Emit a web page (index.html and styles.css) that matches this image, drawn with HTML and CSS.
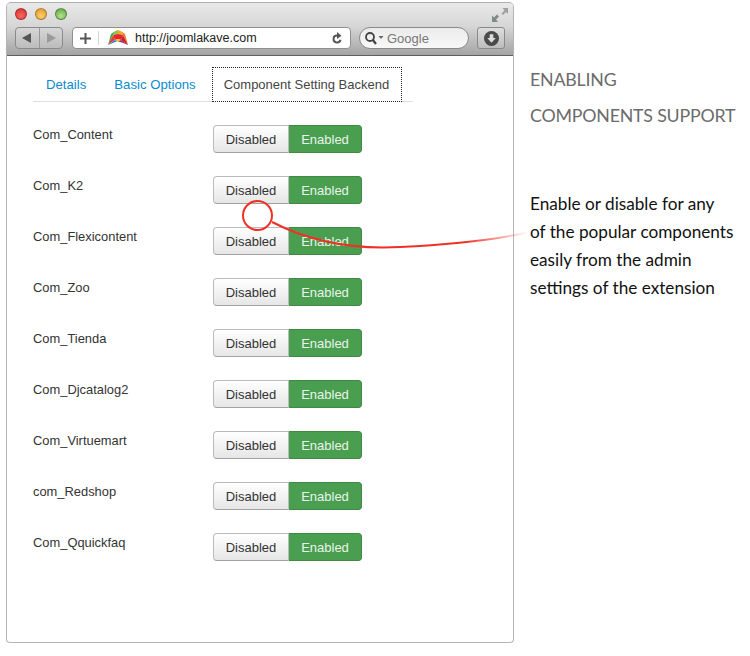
FILE: index.html
```html
<!DOCTYPE html>
<html lang="en">
<head>
<meta charset="utf-8">
<title>Enabling components support</title>
<link rel="stylesheet" href="styles.css">
</head>
<body>
<div class="page">
  <div class="window">
    <div class="chrome">
      <div class="lights">
        <span class="light red"></span><span class="light amber"></span><span class="light green"></span>
        <svg class="expand" width="16" height="14" viewBox="0 0 16 14"><path d="M0 14V7.500l2 2L5 6.500l2 2-3 3 2 2.500z" fill="#7f8a84"/><path d="M16 0v6l-2-2-3 3-1.500-1.500 3-3L10.500 0z" fill="#a0a0a0"/></svg>
      </div>
      <div class="tools">
        <div class="nav">
          <span class="navbtn"><svg width="12" height="12" viewBox="0 0 12 12"><path d="M1 6l9-5v10z" fill="#555"/></svg></span>
          <span class="navbtn"><svg width="12" height="12" viewBox="0 0 12 12"><path d="M11 6L2 1v10z" fill="#9a9a9a"/></svg></span>
        </div>
        <div class="address">
          <svg class="plus" width="11" height="11" viewBox="0 0 11 11"><path d="M4.500 0h2v4.500H11v2H6.500V11h-2V6.500H0v-2h4.500z" fill="#555"/></svg>
          <span class="divider"></span>
          <svg class="logo" width="20" height="16" viewBox="0 0 20 16">
            <path d="M10 0L6.500 1.500 5 5l5-1z" fill="#8cc63f"/>
            <path d="M6.500 1.500L3 4 0 15l5-10z" fill="#3faa4a"/>
            <path d="M10 0l3.500 1.500L15 5l-5-1z" fill="#f6a623"/>
            <path d="M13.500 1.500L17 4l3 11-5-10z" fill="#ef7d22"/>
            <path d="M5 5l5-1 5 1-2 5-3-1-3 1z" fill="#e6262c"/>
            <path d="M15 5l5 10-7-5z" fill="#c7202f"/>
            <path d="M5 5L0 15l7-5z" fill="#e0403a"/>
            <path d="M0 15l7-5 3 1-4 1.500z" fill="#2a86cf"/>
            <path d="M7 10l3-1 3 1-3 1.500z" fill="#f7c21e"/>
            <path d="M20 15l-7-5-3 1.500 4 1z" fill="#a02a56"/>
          </svg>
          <span class="url">http://joomlakave.com</span>
          <svg class="reload" width="12" height="13" viewBox="0 0 12 13"><path d="M6 2.500a4.500 4.500 0 1 0 4.500 5.200H8.400A2.500 2.500 0 1 1 6 4.500V7l4.500-3.200L6 0z" fill="#555"/></svg>
        </div>
        <div class="search">
          <svg width="19" height="13" viewBox="0 0 19 13"><circle cx="5" cy="5" r="4" fill="none" stroke="#444" stroke-width="1.800"/><path d="M7.500 7.500L11 12" stroke="#444" stroke-width="2.200"/><path d="M13.500 4h5L16 7z" fill="#666"/></svg>
          <span class="google">Google</span>
        </div>
        <span class="download"><svg width="15" height="15" viewBox="0 0 14 14"><circle cx="7" cy="7" r="7" fill="#4a4a4a"/><path d="M5.300 3h3.400v3.600H11L7 11 3 6.600h2.300z" fill="#ddd"/></svg></span>
      </div>
    </div>
    <div class="content">
      <div class="tabs">
        <a class="tab">Details</a>
        <a class="tab">Basic Options</a>
        <a class="tab active">Component Setting Backend</a>
      </div>
      <div class="rows">
        <div class="row"><span class="label">Com_Content</span><div class="toggle"><span class="off">Disabled</span><span class="on">Enabled</span></div></div>
        <div class="row"><span class="label">Com_K2</span><div class="toggle"><span class="off">Disabled</span><span class="on">Enabled</span></div></div>
        <div class="row"><span class="label">Com_Flexicontent</span><div class="toggle"><span class="off">Disabled</span><span class="on">Enabled</span></div></div>
        <div class="row"><span class="label">Com_Zoo</span><div class="toggle"><span class="off">Disabled</span><span class="on">Enabled</span></div></div>
        <div class="row"><span class="label">Com_Tienda</span><div class="toggle"><span class="off">Disabled</span><span class="on">Enabled</span></div></div>
        <div class="row"><span class="label">Com_Djcatalog2</span><div class="toggle"><span class="off">Disabled</span><span class="on">Enabled</span></div></div>
        <div class="row"><span class="label">Com_Virtuemart</span><div class="toggle"><span class="off">Disabled</span><span class="on">Enabled</span></div></div>
        <div class="row"><span class="label">com_Redshop</span><div class="toggle"><span class="off">Disabled</span><span class="on">Enabled</span></div></div>
        <div class="row"><span class="label">Com_Qquickfaq</span><div class="toggle"><span class="off">Disabled</span><span class="on">Enabled</span></div></div>
      </div>
    </div>
  </div>
  <div class="aside">
    <h1 class="title">ENABLING<br>COMPONENTS SUPPORT</h1>
    <p class="desc">Enable or disable for any<br>of the popular components<br>easily from the admin<br>settings of the extension</p>
  </div>
  <svg class="callout" width="750" height="656" viewBox="0 0 750 656">
    <defs><linearGradient id="fade" gradientUnits="userSpaceOnUse" x1="465" y1="0" x2="528" y2="0"><stop offset="0" stop-color="#ee3124"/><stop offset="1" stop-color="#ee3124" stop-opacity="0"/></linearGradient></defs>
    <circle cx="257.500" cy="215.500" r="14.500" fill="none" stroke="#ee3124" stroke-width="2"/>
    <path d="M272 222C305 239 345 250 400 247C445 245 490 241 530 232" fill="none" stroke="url(#fade)" stroke-width="2"/>
  </svg>
</div>
</body>
</html>
```
FILE: styles.css
```css
* { box-sizing: border-box; }
html, body { margin: 0; padding: 0; background: #fff; }
.page { position: relative; width: 750px; height: 656px; display: flex; align-items: flex-start; padding: 2px 0 0 6px; overflow: hidden; }
.window { width: 508px; height: 641px; flex: none; display: flex; flex-direction: column; border: 1px solid #b4b4b4; border-top-color: #aeaeae; border-radius: 5px 5px 4px 4px; overflow: hidden; background: #fff; }
.chrome { height: 53px; flex: none; background: linear-gradient(#e9e9e9, #d6d6d6 45%, #a4a4a4); border-bottom: 1px solid #5f5f5f; padding: 3px 8px 0 8px; }
.lights { height: 15px; display: flex; align-items: center; gap: 8px; }
.light { width: 12px; height: 12px; border-radius: 50%; border: 1px solid rgba(0,0,0,.28); }
.red { background: radial-gradient(circle at 50% 70%, #f56a60, #e2393a 75%); }
.amber { background: radial-gradient(circle at 50% 70%, #fcd26f, #e6a135 75%); }
.green { background: radial-gradient(circle at 50% 70%, #b5e38c, #70b150 75%); }
.expand { margin-left: auto; margin-right: -3px; margin-top: 3px; }
.tools { display: flex; align-items: center; margin-top: 6px; height: 22px; }
.nav { width: 48px; height: 22px; display: flex; border: 1px solid #8a8a8a; border-radius: 4px; background: linear-gradient(#d6d6d6, #bcbcbc); flex: none; }
.navbtn { flex: 1; display: flex; align-items: center; justify-content: center; }
.navbtn + .navbtn { border-left: 1px solid #999; }
.address { width: 279px; height: 22px; margin-left: 9px; flex: none; display: flex; align-items: center; background: #fff; border: 1px solid #8f8f8f; border-radius: 4px; padding: 0 7px; }
.plus { flex: none; }
.divider { width: 1px; height: 14px; background: #d5d5d5; margin: 0 9px 0 7px; }
.logo { flex: none; }
.url { font: 12.500px "Liberation Sans", Arial, sans-serif; color: #222; margin-left: 7px; flex: 1; white-space: nowrap; }
.search { width: 110px; height: 22px; margin-left: 8px; flex: none; display: flex; align-items: center; gap: 3px; padding-left: 5px; background: linear-gradient(#ebebeb, #f8f8f8); border: 1px solid #8a8a8a; border-radius: 11px; }
.google { font: 13px "Liberation Sans", Arial, sans-serif; color: #777; }
.download { width: 28px; height: 22px; margin-left: 8px; flex: none; display: flex; align-items: center; justify-content: center; border: 1px solid #8a8a8a; border-radius: 3px; background: linear-gradient(#dedede, #bcbcbc); }
.content { flex: 1; padding: 11px 0 0 26px; }
.tabs { width: 380px; height: 35px; display: flex; border-bottom: 1px solid #ddd; font: 13.200px "Liberation Sans", Arial, sans-serif; }
.tab { height: 34px; padding: 0 14px; display: flex; align-items: center; color: #0a8bd0; white-space: nowrap; }
.tab:first-child { padding-left: 13px; }
.tab.active { height: 35px; width: 190px; padding: 0 11px; font-size: 13px; color: #444; border: 1px dotted #222; background: #fff; margin-left: 2px; }
.rows { padding-top: 23px; display: flex; flex-direction: column; gap: 23px; }
.row { height: 28px; display: flex; align-items: flex-start; }
.label { width: 180px; padding-top: 1px; font: 12.900px/18px "Liberation Sans", Arial, sans-serif; color: #333; }
.toggle { display: flex; width: 149px; height: 28px; font: 13px/26px "Liberation Sans", Arial, sans-serif; border-radius: 4px; }
.off { width: 76px; padding-top: 1px; text-align: center; color: #333; background: linear-gradient(#fff, #e6e6e6); border: 1px solid #bbb; border-bottom-color: #a2a2a2; border-radius: 4px 0 0 4px; }
.on { flex: 1; padding-top: 1px; text-align: center; color: #e9f5ea; background: #4a9e50; border: 1px solid #3f8845; border-left: 0; border-radius: 0 4px 4px 0; }
.aside { margin-left: 16px; width: 220px; flex: none; font-family: Lato, sans-serif; }
.title { margin: 59px 0 0; font-size: 17.800px; letter-spacing: -.2px; line-height: 36px; font-weight: 400; color: #6b6b6b; white-space: nowrap; }
.desc { margin: 57px 0 0; font-size: 17.200px; line-height: 28px; color: #111; white-space: nowrap; }
.callout { position: absolute; left: 0; top: 0; pointer-events: none; }
```
